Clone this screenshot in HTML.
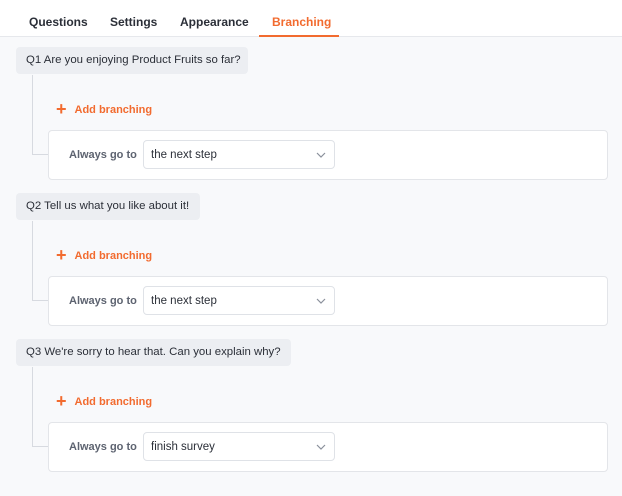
<!DOCTYPE html>
<html><head><style>
*{box-sizing:border-box;margin:0;padding:0}
body{width:622px;height:496px;background:#f8f9fb;font-family:"Liberation Sans",sans-serif;position:relative;overflow:hidden;color:#2b2f38}
.top{position:absolute;left:0;top:0;width:622px;height:37px;background:#fff;border-bottom:1px solid #e6e8ec}
.tab{position:absolute;top:15px;font-size:12px;font-weight:bold;color:#2b2f38;white-space:nowrap}
.act{color:#f26b2f}
.ul{position:absolute;left:259px;top:35px;width:80px;height:2px;background:#f26b2f}
.q{position:absolute;left:16px;height:27px;background:#eceef2;border-radius:4px;font-size:11.4px;line-height:27px;padding-left:10px;color:#2b2f38;white-space:nowrap}
.vl{position:absolute;left:32px;width:16px;border-left:1px solid #d7dae0;border-bottom:1px solid #d7dae0}
.add{position:absolute;left:56px;font-size:11px;font-weight:bold;color:#f26b2f;white-space:nowrap}
.add span{font-size:18px;font-weight:bold;margin-right:8px;position:relative;top:2px}
.card{position:absolute;left:48px;width:560px;height:50px;background:#fff;border:1px solid #e3e5e9;border-radius:4px}
.lbl{position:absolute;left:20px;top:18px;font-size:11px;font-weight:bold;color:#5d6370;white-space:nowrap}
.sel{position:absolute;left:94px;top:9px;width:192px;height:29px;border:1px solid #dfe2e7;border-radius:4px;font-size:11.5px;line-height:29px;padding-left:7px;color:#2b2f38;white-space:nowrap}
.sel svg{position:absolute;right:8px;top:11px}
</style></head><body>
<div class="top">
<div class="tab" style="left:29px">Questions</div>
<div class="tab" style="left:110px">Settings</div>
<div class="tab" style="left:180px">Appearance</div>
<div class="tab act" style="left:272px">Branching</div>
<div class="ul"></div>
</div>

<div class="q" style="top:47px;width:232px">Q1 Are you enjoying Product Fruits so far?</div>
<div class="vl" style="top:75px;height:80px"></div>
<div class="add" style="top:97px"><span>+</span>Add branching</div>
<div class="card" style="top:130px"><div class="lbl">Always go to</div><div class="sel">the next step<svg width="10" height="6"><path d="M1 1l4 4 4-4" stroke="#8a909b" fill="none" stroke-width="1.2"/></svg></div></div>

<div class="q" style="top:193px;width:184px">Q2 Tell us what you like about it!</div>
<div class="vl" style="top:221px;height:80px"></div>
<div class="add" style="top:243px"><span>+</span>Add branching</div>
<div class="card" style="top:276px"><div class="lbl">Always go to</div><div class="sel">the next step<svg width="10" height="6"><path d="M1 1l4 4 4-4" stroke="#8a909b" fill="none" stroke-width="1.2"/></svg></div></div>

<div class="q" style="top:339px;width:275px">Q3 We're sorry to hear that. Can you explain why?</div>
<div class="vl" style="top:367px;height:80px"></div>
<div class="add" style="top:389px"><span>+</span>Add branching</div>
<div class="card" style="top:422px"><div class="lbl">Always go to</div><div class="sel">finish survey<svg width="10" height="6"><path d="M1 1l4 4 4-4" stroke="#8a909b" fill="none" stroke-width="1.2"/></svg></div></div>
</body></html>
